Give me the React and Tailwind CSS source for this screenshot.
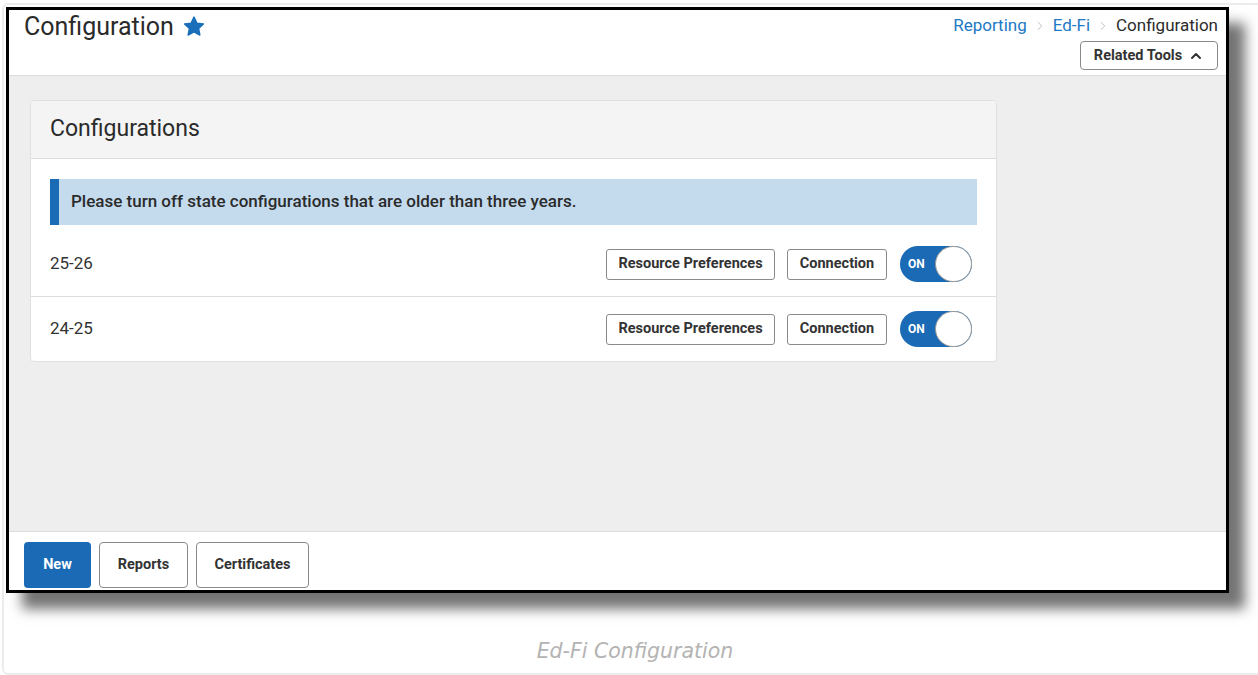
import React from "react";
import { ChevronUp, ChevronRight } from "lucide-react";

const ui = { fontFamily: "Roboto, 'Liberation Sans', Arial, sans-serif" };

function Star() {
  return (
    <svg width="22" height="21" viewBox="0 0 24 23" className="ml-[9px] mt-[1px]">
      <path
        d="M12 1.2l3.1 6.6 7.2.9-5.3 5 1.4 7.1L12 17.3l-6.4 3.5 1.4-7.1-5.3-5 7.2-.9z"
        fill="#1b6fba"
        stroke="#1b6fba"
        strokeWidth="1.6"
        strokeLinejoin="round"
      />
    </svg>
  );
}

function OutlineButton({ children, className = "" }) {
  return (
    <button
      className={
        "border border-[#8a8a8a] rounded-[3px] bg-white text-[14.5px] font-bold text-[#333] leading-none " +
        className
      }
    >
      {children}
    </button>
  );
}

function Toggle() {
  return (
    <div className="relative w-[72px] h-[36px] rounded-full bg-[#1a6ab5] flex items-center">
      <span className="pl-[8px] text-[12px] font-bold text-white">ON</span>
      <span className="absolute right-0 top-0 w-[37px] h-[36px] rounded-full bg-white border border-[#9a9a9a]" />
    </div>
  );
}

function ConfigRow({ label, first }) {
  return (
    <div
      className={
        "flex items-center pl-[19px] pr-[24px] " +
        (first ? "h-[65px] border-b border-[#dddddd]" : "h-[64px]")
      }
    >
      <span className="text-[17px] text-[#333] flex-1">{label}</span>
      <OutlineButton className="w-[169px] h-[31px]">Resource Preferences</OutlineButton>
      <OutlineButton className="w-[100px] h-[31px] ml-[12px]">Connection</OutlineButton>
      <div className="ml-[13px]">
        <Toggle />
      </div>
    </div>
  );
}

export default function App() {
  return (
    <div className="w-[1258px] h-[675px] bg-white overflow-hidden relative" style={ui}>
      {/* page frame */}
      <div className="absolute left-[2px] top-[3px] w-[1270px] h-[672px] border-2 border-[#ececec] rounded-[6px]" />

      <div className="relative pt-[7px] pl-[6px]">
        <div className="w-[1223px] h-[586px] border-[3px] border-black bg-white flex flex-col shadow-[16px_16px_12px_rgba(0,0,0,0.55)]">
          {/* header */}
          <div className="h-[66px] border-b border-[#dcdcdc] flex justify-between pl-[15px] pr-[8px]">
            <div className="flex items-center h-[30px] mt-[1px]">
              <h1 className="text-[25px] text-[#2b2b2b] leading-none">Configuration</h1>
              <Star />
            </div>
            <div className="flex flex-col items-end">
              <div className="flex items-center h-[24px] mt-[4px] text-[17px]">
                <span className="text-[#2279c6]">Reporting</span>
                <ChevronRight size={14} strokeWidth={1.5} className="text-[#b5b5b5] mx-[6px]" />
                <span className="text-[#2279c6]">Ed-Fi</span>
                <ChevronRight size={14} strokeWidth={1.5} className="text-[#b5b5b5] mx-[6px]" />
                <span className="text-[#2b2b2b]">Configuration</span>
              </div>
              <button className="mt-[3px] h-[29px] w-[138px] border border-[#8a8a8a] rounded-[4px] flex items-center justify-center text-[14.5px] font-bold text-[#333]">
                Related Tools
                <ChevronUp size={16} strokeWidth={3} className="ml-[6px]" />
              </button>
            </div>
          </div>

          {/* content */}
          <div className="flex-1 bg-[#eeeeee] pt-[24px] pl-[21px]">
            <div className="w-[967px] bg-white border border-[#e0e0e0] rounded-[4px]">
              <div className="h-[58px] bg-[#f4f4f4] border-b border-[#dddddd] flex items-center pl-[19px] rounded-t-[4px]">
                <h2 className="text-[23px] text-[#2b2b2b]">Configurations</h2>
              </div>
              <div className="pt-[20px] px-[19px] pb-[7px]">
                <div className="h-[46px] bg-[#c4dbee] border-l-[9px] border-[#1a6ab5] flex items-center pl-[12px]">
                  <span className="text-[17px] font-medium text-[#2b2b2b]">
                    Please turn off state configurations that are older than three years.
                  </span>
                </div>
              </div>
              <ConfigRow label="25-26" first />
              <ConfigRow label="24-25" />
            </div>
          </div>

          {/* action bar */}
          <div className="h-[59px] border-t border-[#dcdcdc] flex items-start pt-[10px] pl-[15px] gap-[8px]">
            <button className="w-[67px] h-[46px] rounded-[4px] bg-[#1a6ab5] text-white text-[14.5px] font-bold">
              New
            </button>
            <OutlineButton className="w-[89px] h-[46px] rounded-[4px]">Reports</OutlineButton>
            <OutlineButton className="w-[113px] h-[46px] rounded-[4px]">Certificates</OutlineButton>
          </div>
        </div>
      </div>

      <div
        className="absolute left-[6px] w-[1258px] top-[636px] text-center text-[20.5px] italic text-[#b3b3b3]"
        style={{ fontFamily: "'DejaVu Sans', sans-serif" }}
      >
        Ed-Fi Configuration
      </div>
    </div>
  );
}
